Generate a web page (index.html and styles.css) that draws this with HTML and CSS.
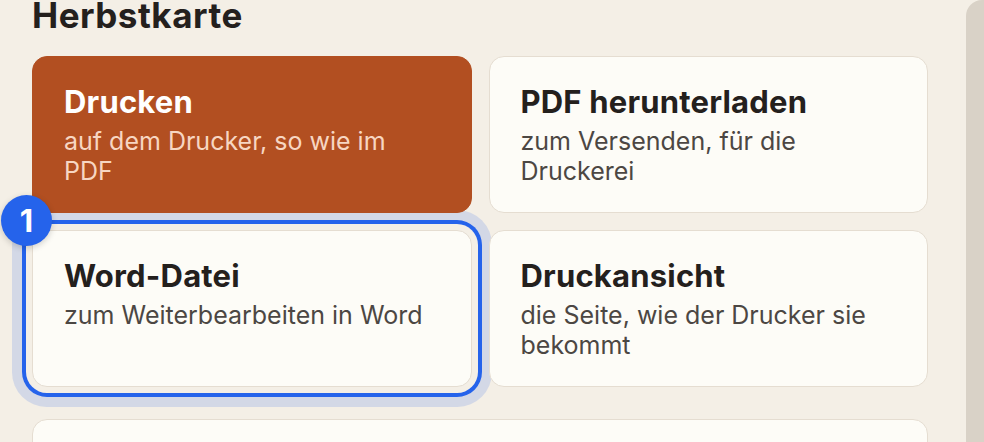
FILE: index.html
```html
<!DOCTYPE html>
<html lang="de">
<head>
    <meta charset="UTF-8">
    <meta name="viewport" content="width=device-width, initial-scale=1.0">
    <title>Herbstkarte – Ausgabe</title>
    <link rel="stylesheet" href="styles.css">
</head>
<body>
    <div class="layout">
        <main class="main">
            <h1 class="page-title">Herbstkarte</h1>

            <div class="options">
                <button class="option option-primary" type="button">
                    <span class="option-title">Drucken</span>
                    <span class="option-desc">auf dem Drucker, so wie im PDF</span>
                </button>
                <button class="option" type="button">
                    <span class="option-title">PDF herunterladen</span>
                    <span class="option-desc">zum Versenden, für die Druckerei</span>
                </button>
                <button class="option option-focus" type="button">
                    <span class="step-badge">1</span>
                    <span class="option-title">Word-Datei</span>
                    <span class="option-desc">zum Weiterbearbeiten in Word</span>
                </button>
                <button class="option" type="button">
                    <span class="option-title">Druckansicht</span>
                    <span class="option-desc">die Seite, wie der Drucker sie bekommt</span>
                </button>
            </div>

            <div class="panel"></div>
        </main>
        <aside class="sidebar"></aside>
    </div>
</body>
</html>
```

FILE: styles.css
```css
body {
    font-family: Inter, "Noto Sans", sans-serif;
    margin: 0;
    padding: 0;
    background: #f4efe6;
    color: #24201d;
    overflow: hidden;
}

.layout {
    display: flex;
    min-height: 442px;
}

.main {
    flex: 1;
    padding: 0 38px 0 32px;
}

.sidebar {
    width: 18px;
    background: #d9d2c7;
    border-top-left-radius: 16px;
}

.page-title {
    margin: 0;
    font-size: 35px;
    line-height: 30px;
    font-weight: 700;
    letter-spacing: 0.5px;
}

.options {
    display: grid;
    grid-template-columns: 1fr 1fr;
    column-gap: 17px;
    row-gap: 17px;
    margin-top: 26px;
}

.option {
    position: relative;
    display: flex;
    flex-direction: column;
    align-items: flex-start;
    text-align: left;
    font-family: inherit;
    background: #fdfcf7;
    border: 1px solid #e5ddd1;
    border-radius: 15px;
    padding: 27px 40px 26px 31px;
    cursor: pointer;
    color: #24201d;
}

.option-title {
    font-size: 31px;
    line-height: 36px;
    font-weight: 700;
    letter-spacing: 0.2px;
}

.option-desc {
    margin-top: 6px;
    font-size: 25px;
    line-height: 30px;
    color: #4c4743;
}

.option-primary {
    background: #b24f21;
    border-color: #b24f21;
    color: #ffffff;
    z-index: 1;
}

.option-primary .option-desc {
    color: #f7d6c2;
}

/* keyboard focus: cream gap, blue ring, soft halo */
.option-focus {
    box-shadow:
        0 0 0 6px #f4efe6,
        0 0 0 10px #2563eb,
        0 0 0 20px #d3d8e6;
}

.step-badge {
    position: absolute;
    left: -32px;
    top: -36px;
    width: 51px;
    height: 51px;
    border-radius: 50%;
    background: #2563eb;
    color: #ffffff;
    font-size: 31px;
    font-weight: 700;
    display: flex;
    align-items: center;
    justify-content: center;
    box-shadow: 0 2px 6px rgba(0, 0, 0, 0.18);
    z-index: 2;
}

.panel {
    margin-top: 32px;
    height: 80px;
    background: #fdfcf7;
    border: 1px solid #e5ddd1;
    border-radius: 15px;
}
```
